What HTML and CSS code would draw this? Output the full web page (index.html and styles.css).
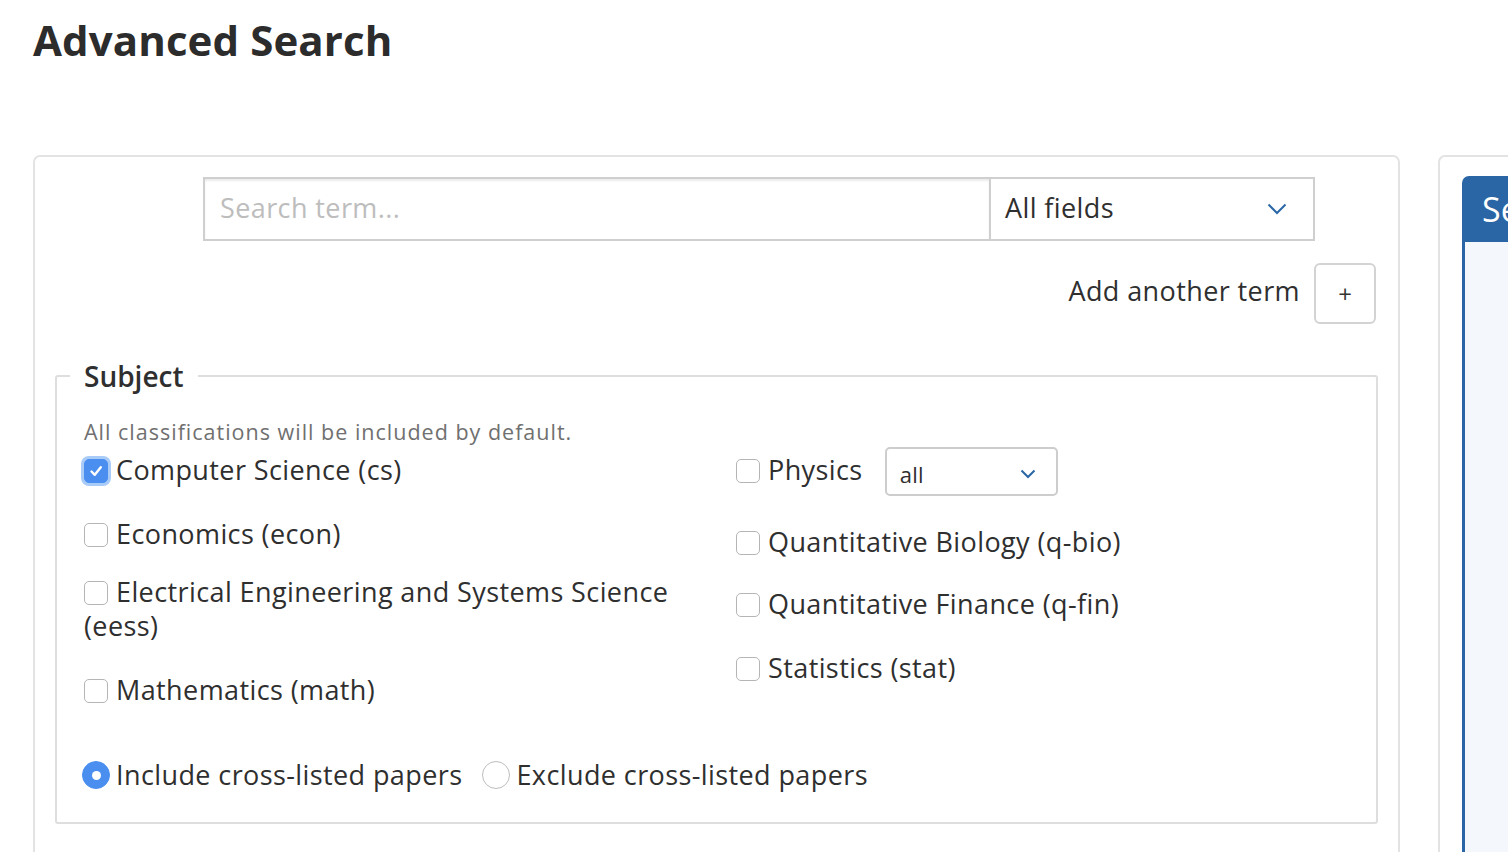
FILE: index.html
```html
<!DOCTYPE html>
<html lang="en">
<head>
<meta charset="utf-8">
<title>Advanced Search</title>
<link rel="stylesheet" href="styles.css">
</head>
<body>
  <h1 class="page-title">Advanced Search</h1>

  <div class="layout">
    <form class="card search-card">
      <div class="term-row">
        <input class="term-input" type="text" placeholder="Search term...">
        <div class="field-select">
          <span>All fields</span>
          <svg class="chevron" viewBox="0 0 20 12" width="20" height="12"><path d="M1.5 1.5 L10 10 L18.5 1.5" fill="none" stroke="currentColor" stroke-width="2"/></svg>
        </div>
      </div>

      <div class="add-row">
        <span class="add-label">Add another term</span>
        <button type="button" class="add-btn">+</button>
      </div>

      <fieldset class="subject">
        <legend>Subject</legend>
        <p class="help">All classifications will be included by default.</p>

        <div class="subject-grid">
          <div class="subject-col">
            <label class="check check-cs"><span class="box checked"><svg viewBox="0 0 16 16" width="16" height="16"><path d="M3.5 8.5 L6.8 11.8 L12.8 4.2" fill="none" stroke="#fff" stroke-width="2.4" stroke-linecap="round" stroke-linejoin="round"/></svg></span>Computer Science (cs)</label>
            <label class="check check-econ"><span class="box"></span>Economics (econ)</label>
            <label class="check check-eess"><span class="box"></span>Electrical Engineering and Systems Science (eess)</label>
            <label class="check check-math"><span class="box"></span>Mathematics (math)</label>
          </div>
          <div class="subject-col">
            <div class="physics-row">
              <label class="check"><span class="box"></span>Physics</label>
              <div class="mini-select">
                <span>all</span>
                <svg class="chevron" viewBox="0 0 16 10" width="16" height="10"><path d="M1.5 1.5 L8 8 L14.5 1.5" fill="none" stroke="currentColor" stroke-width="2"/></svg>
              </div>
            </div>
            <label class="check check-qbio"><span class="box"></span>Quantitative Biology (q-bio)</label>
            <label class="check check-qfin"><span class="box"></span>Quantitative Finance (q-fin)</label>
            <label class="check check-stat"><span class="box"></span>Statistics (stat)</label>
          </div>
        </div>

        <div class="radio-row">
          <label class="radio"><span class="dot on"></span>Include cross-listed papers</label>
          <label class="radio"><span class="dot"></span>Exclude cross-listed papers</label>
        </div>
      </fieldset>
    </form>

    <aside class="card side-card">
      <div class="side-panel">
        <div class="side-head">Searching</div>
        <div class="side-body"></div>
      </div>
    </aside>
  </div>
</body>
</html>
```

FILE: styles.css
```css
* { box-sizing: border-box; }

html, body {
  margin: 0;
  padding: 0;
  background: #fff;
  overflow: hidden;
}

body {
  font-family: "Open Sans", "Noto Sans", sans-serif;
  color: #2f2f2f;
  width: 1508px;
  height: 852px;
  overflow: hidden;
}

.page-title {
  margin: 0;
  padding: 12px 0 0 33px;
  font-size: 42px;
  line-height: 56px;
  font-weight: 700;
  color: #2c2c2c;
  letter-spacing: 0.1px;
}

.layout {
  display: flex;
  gap: 38px;
  margin: 87px 0 0 33px;
}

.card {
  border: 2px solid #e3e3e3;
  border-radius: 7px;
  background: #fff;
}

.search-card {
  width: 1367px;
  height: 720px;
  flex: none;
  padding: 20px 20px 0 20px;
  margin: 0;
}

/* search term + field selector */
.term-row {
  display: flex;
  margin-left: 148px;
  width: 1112px;
  height: 64px;
}

.term-input {
  width: 786px;
  height: 64px;
  border: 2px solid #cfcfcf;
  border-right: none;
  box-shadow: inset 0 2px 2px rgba(0, 0, 0, 0.08);
  padding: 0 15px 3px 15px;
  font: inherit;
  font-size: 27px;
  letter-spacing: 0.4px;
  color: #333;
  outline: none;
}

.term-input::placeholder { color: #bdbdbd; }

.field-select {
  flex: 1;
  display: flex;
  align-items: center;
  justify-content: space-between;
  border: 2px solid #cfcfcf;
  padding: 0 26px 3px 14px;
  font-size: 27px;
  letter-spacing: 0.4px;
  color: #2f2f2f;
}

.field-select .chevron { margin-top: 3px; }

.chevron { color: #2a67a6; }

.add-row {
  display: flex;
  justify-content: flex-end;
  align-items: center;
  gap: 14px;
  margin-top: 22px;
  padding-right: 2px;
}

.add-label {
  font-size: 27px;
  letter-spacing: 0.4px;
  color: #2f2f2f;
  margin-top: -6px;
}

.add-btn {
  width: 62px;
  height: 61px;
  border: 2px solid #d3d3d3;
  border-radius: 6px;
  background: #fff;
  font: inherit;
  font-size: 24px;
  color: #333;
  padding: 0;
}

/* subject fieldset */
.subject {
  margin: 32px 0 0 0;
  border: 2px solid #dedede;
  border-radius: 3px;
  padding: 0 27px 30px 27px;
  min-width: 0;
}

.subject legend {
  margin-left: -14px;
  padding: 0 14px;
  font-size: 28px;
  font-weight: 600;
  line-height: 40px;
  color: #2f2f2f;
}

.help {
  margin: 20px 0 0 0;
  font-size: 21.5px;
  line-height: 32px;
  letter-spacing: 1px;
  color: #707070;
}

.subject-grid {
  display: grid;
  grid-template-columns: 652px 1fr;
  margin-top: -1px;
}

.subject-col {
  display: flex;
  flex-direction: column;
  align-items: flex-start;
}

.check {
  display: flex;
  align-items: flex-start;
  font-size: 27px;
  letter-spacing: 0.4px;
  line-height: 34px;
  color: #2f2f2f;
  max-width: 600px;
}

.check-cs { margin-top: 6px; }
.check-econ { margin-top: 30px; }
.check-eess { margin-top: 24px; display: block; }
.check-math { margin-top: 30px; }

.check-qbio { margin-top: 29px; }
.check-qfin { margin-top: 28px; }
.check-stat { margin-top: 30px; }

.box {
  flex: none;
  display: inline-flex;
  align-items: center;
  justify-content: center;
  width: 24px;
  height: 24px;
  margin: 6px 8px 0 0;
  border: 1.5px solid #b5b5b5;
  border-radius: 5px;
  background: #fff;
  vertical-align: -3px;
}

.check-eess .box { display: inline-flex; margin-top: 0; }

.box.checked {
  background: #4a8ff0;
  border-color: #4a8ff0;
  box-shadow: 0 0 0 3px #a9cbf8;
}

.physics-row {
  display: flex;
  align-items: center;
  gap: 22px;
}

.physics-row .check { margin-top: -4px; }

.mini-select {
  width: 173px;
  height: 49px;
  border: 2px solid #cdcdcd;
  border-radius: 5px;
  display: flex;
  align-items: center;
  justify-content: space-between;
  padding: 4px 20px 0 13px;
  font-size: 22px;
  letter-spacing: 0.3px;
  color: #2f2f2f;
}

.radio-row {
  display: flex;
  align-items: center;
  gap: 20px;
  margin-top: 51px;
  margin-left: -2px;
}

.radio {
  display: flex;
  align-items: center;
  font-size: 27px;
  letter-spacing: 0.4px;
  line-height: 34px;
  color: #2f2f2f;
}

.dot {
  width: 28px;
  height: 28px;
  border-radius: 50%;
  border: 1.5px solid #bdbdbd;
  background: #fff;
  margin-right: 6px;
  position: relative;
}

.dot.on {
  background: #4a8ff0;
  border-color: #4a8ff0;
}

.dot.on::after {
  content: "";
  position: absolute;
  left: 50%;
  top: 50%;
  width: 9px;
  height: 9px;
  margin: -4.5px 0 0 -4.5px;
  border-radius: 50%;
  background: #fff;
}

/* side card */
.side-card {
  flex: none;
  width: 70px;
  height: 720px;
  padding: 19px 0 0 22px;
  border-right: none;
  border-radius: 7px 0 0 0;
  overflow: hidden;
}

.side-panel {
  height: 100%;
}

.side-head {
  height: 66px;
  background: #2a66a5;
  border-radius: 7px 0 0 0;
  color: #fff;
  font-size: 34px;
  line-height: 66px;
  padding-left: 20px;
  white-space: nowrap;
  overflow: hidden;
}

.side-body {
  height: 620px;
  background: #f4f8fd;
  border-left: 3px solid #2a66a5;
}
```
